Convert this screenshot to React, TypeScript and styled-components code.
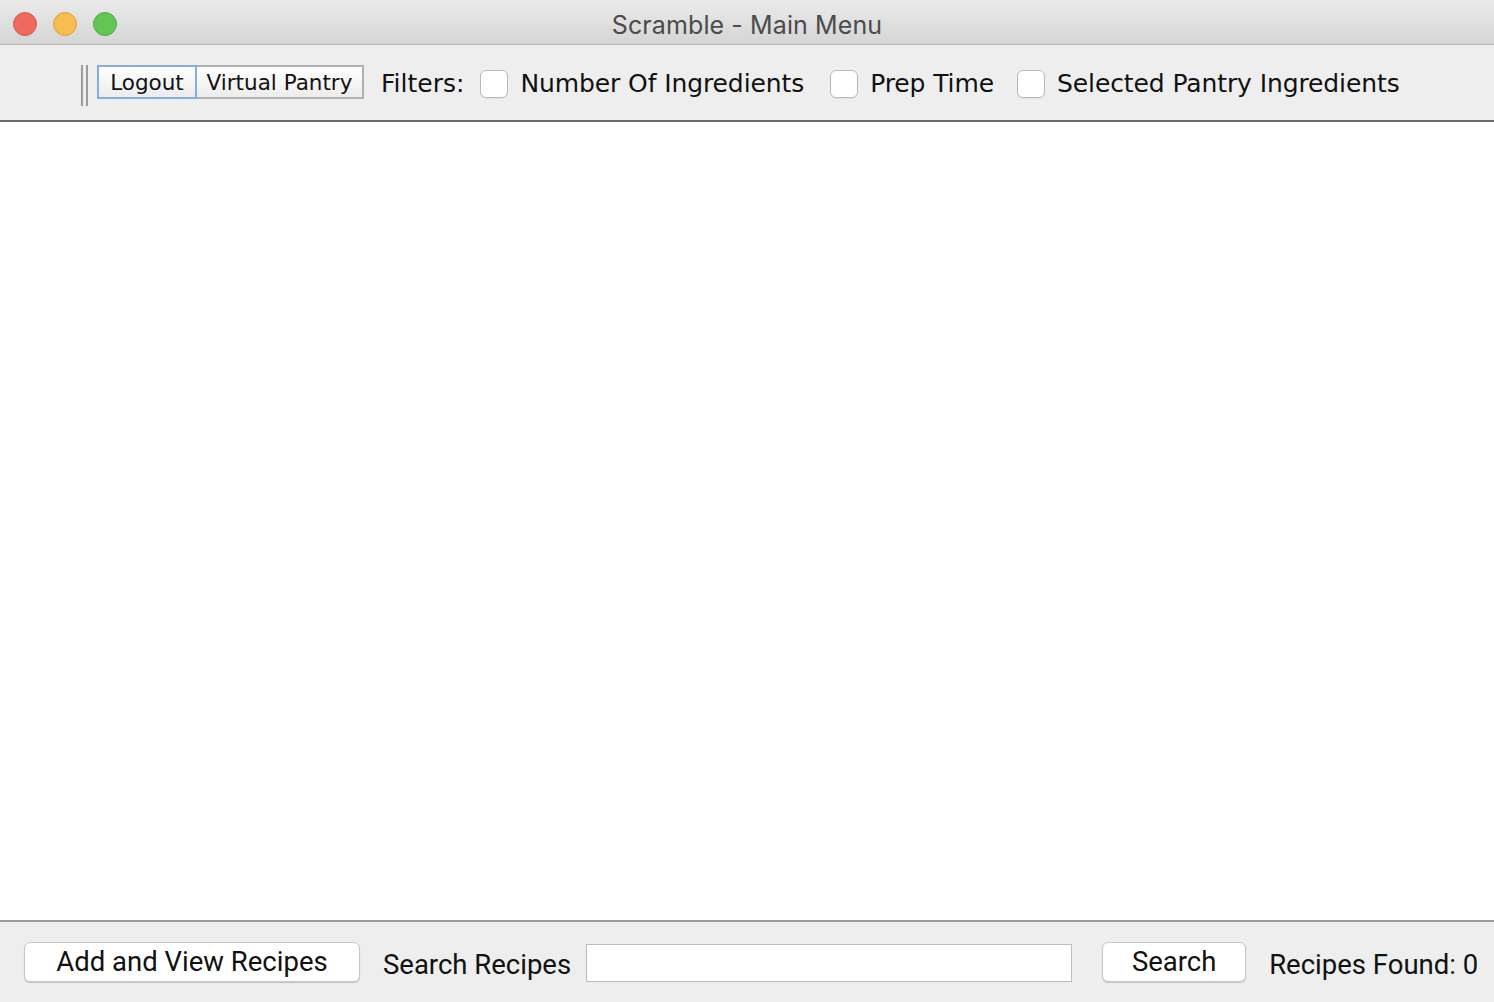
import React from "react";
import styled, { createGlobalStyle } from "styled-components";

const GlobalStyle = createGlobalStyle`
  html, body { margin: 0; padding: 0; height: 100%; background: #ffffff; }
  #root { height: 100%; }
  * { box-sizing: border-box; }
`;

const Window = styled.div`
  display: flex;
  flex-direction: column;
  width: 100%;
  height: 1002px;
  background: #ffffff;
  overflow: hidden;
`;

const TitleBar = styled.div`
  position: relative;
  display: flex;
  align-items: center;
  justify-content: center;
  height: 45px;
  padding-top: 5px;
  background: linear-gradient(#ebebeb, #d5d5d5);
  border-bottom: 1px solid #b4b4b4;
  flex-shrink: 0;
`;

const Lights = styled.div`
  position: absolute;
  left: 13px;
  top: 12px;
  display: flex;
  gap: 16px;
`;

const Light = styled.span<{ $fill: string; $edge: string }>`
  width: 24px;
  height: 24px;
  border-radius: 50%;
  background: ${(p) => p.$fill};
  border: 1px solid ${(p) => p.$edge};
`;

const Title = styled.div`
  font-family: Inter, "Liberation Sans", sans-serif;
  font-size: 25px;
  color: #4b4b4b;
  letter-spacing: 0.1px;
`;

const Toolbar = styled.div`
  display: flex;
  align-items: center;
  height: 77px;
  padding-left: 81px;
  background: #eeeeee;
  border-bottom: 2px solid #6a6a6a;
  flex-shrink: 0;
`;

const Grip = styled.div`
  display: flex;
  gap: 3px;
  height: 41px;
  margin-top: 5px;
  margin-right: 9px;
`;

const GripLine = styled.span`
  width: 2px;
  height: 100%;
  background: #9c9c9c;
`;

const ToolButton = styled.button<{ $focused?: boolean; $joined?: boolean; $w: number }>`
  width: ${(p) => p.$w}px;
  height: 34px;
  margin-top: -1px;
  padding: 0;
  font-family: "DejaVu Sans", Verdana, sans-serif;
  font-size: 21.5px;
  color: #111111;
  background: linear-gradient(#ffffff, #ececec);
  border: 2px solid ${(p) => (p.$focused ? "#86addb" : "#b0b0b0")};
  border-left-width: ${(p) => (p.$joined ? 0 : 2)}px;
  border-radius: 0;
  text-align: center;
`;

const FiltersLabel = styled.span`
  margin-left: 17px;
  margin-right: 16px;
  margin-top: 1px;
  font-family: "DejaVu Sans", Verdana, sans-serif;
  font-size: 25px;
  color: #111111;
`;

const FilterItem = styled.label<{ $gapBefore: number }>`
  display: flex;
  align-items: center;
  gap: 12px;
  margin-left: ${(p) => p.$gapBefore}px;
  margin-top: 2px;
  font-family: "DejaVu Sans", Verdana, sans-serif;
  font-size: 25px;
  letter-spacing: -0.1px;
  color: #111111;
`;

const CheckBox = styled.span`
  width: 28px;
  height: 28px;
  border-radius: 6px;
  background: #ffffff;
  border: 1px solid #b9b9b9;
  box-shadow: 0 1px 0 rgba(0, 0, 0, 0.05);
`;

const Content = styled.div`
  flex: 1;
  background: #ffffff;
`;

const BottomBar = styled.div`
  display: flex;
  align-items: center;
  height: 82px;
  padding-left: 24px;
  background: #eeeeee;
  border-top: 2px solid #9b9b9b;
  flex-shrink: 0;
  font-family: Roboto, "Liberation Sans", sans-serif;
  font-size: 27.5px;
  color: #111111;
`;

const PushButton = styled.button<{ $w: number }>`
  width: ${(p) => p.$w}px;
  height: 40px;
  padding: 0 0 2px;
  font-family: Roboto, "Liberation Sans", sans-serif;
  font-size: 27.5px;
  color: #111111;
  background: #ffffff;
  border: 1px solid #c6c6c6;
  border-radius: 6px;
  box-shadow: 0 1px 1px rgba(0, 0, 0, 0.18);
`;

const BottomLabel = styled.span<{ $ml: number }>`
  margin-left: ${(p) => p.$ml}px;
  padding-top: 4px;
`;

const SearchField = styled.input`
  width: 486px;
  height: 38px;
  margin-left: 15px;
  margin-right: 30px;
  margin-top: 2px;
  background: #ffffff;
  border: 1px solid #bdbdbd;
  border-radius: 0;
  outline: none;
  font-family: Roboto, "Liberation Sans", sans-serif;
  font-size: 22px;
`;

export default function App() {
  return (
    <>
      <GlobalStyle />
      <Window>
        <TitleBar>
          <Lights>
            <Light $fill="#ee6a5f" $edge="#d45a50" />
            <Light $fill="#f6be4f" $edge="#d9a240" />
            <Light $fill="#62c655" $edge="#4faa43" />
          </Lights>
          <Title>Scramble - Main Menu</Title>
        </TitleBar>
        <Toolbar>
          <Grip>
            <GripLine />
            <GripLine />
          </Grip>
          <ToolButton $focused $w={100}>Logout</ToolButton>
          <ToolButton $joined $w={167}>Virtual Pantry</ToolButton>
          <FiltersLabel>Filters:</FiltersLabel>
          <FilterItem $gapBefore={0}>
            <CheckBox />
            Number Of Ingredients
          </FilterItem>
          <FilterItem $gapBefore={26}>
            <CheckBox />
            Prep Time
          </FilterItem>
          <FilterItem $gapBefore={23}>
            <CheckBox />
            Selected Pantry Ingredients
          </FilterItem>
        </Toolbar>
        <Content />
        <BottomBar>
          <PushButton $w={336}>Add and View Recipes</PushButton>
          <BottomLabel $ml={23}>Search Recipes</BottomLabel>
          <SearchField />
          <PushButton $w={144}>Search</PushButton>
          <BottomLabel $ml={23}>Recipes Found: 0</BottomLabel>
        </BottomBar>
      </Window>
    </>
  );
}
